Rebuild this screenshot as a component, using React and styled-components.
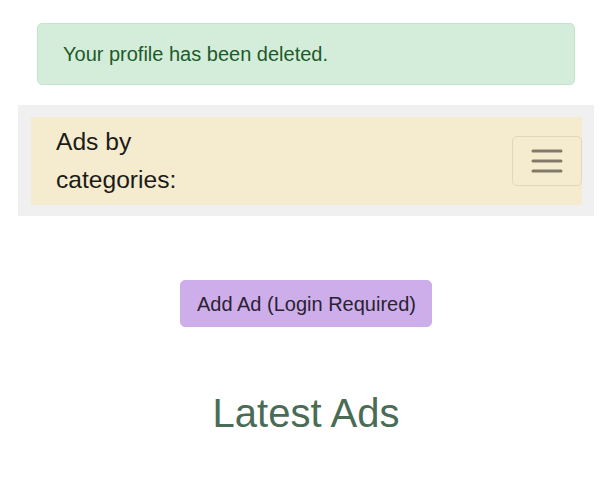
import React from "react";
import styled, { createGlobalStyle } from "styled-components";

const Global = createGlobalStyle`
  html, body { margin: 0; padding: 0; background: #ffffff; }
  body { font-family: "Liberation Sans", Arial, sans-serif; }
  * { box-sizing: border-box; }
`;

const Page = styled.div`
  display: flex;
  flex-direction: column;
  padding: 23px 3px 0 0;
`;

const Alert = styled.div`
  margin: 0 37px 20px 37px;
  padding: 15px 25px;
  background: #d4edda;
  border: 1px solid #c3e6cb;
  border-radius: 5px;
  color: #1d5a2a;
  font-size: 20px;
  line-height: 30px;
`;

const NavOuter = styled.div`
  margin: 0 18px;
  padding: 12px 12px 11px 13px;
  background: #f0f0f0;
`;

const NavBar = styled.nav`
  display: flex;
  align-items: center;
  justify-content: space-between;
  min-height: 88px;
  padding: 6px 0 6px 25px;
  background: #f5ecd0;
`;

const Brand = styled.div`
  width: 160px;
  font-size: 24.6px;
  line-height: 38px;
  color: #1c1b17;
`;

const Toggler = styled.button`
  display: flex;
  align-items: center;
  justify-content: center;
  width: 70px;
  height: 50px;
  padding: 0;
  background: transparent;
  border: 1px solid #e0d7bc;
  border-radius: 5px;
`;

const ActionRow = styled.div`
  display: flex;
  justify-content: center;
  margin-top: 64px;
`;

const AddButton = styled.button`
  height: 47px;
  padding: 0 15px 0 16px;
  background: #cdaeea;
  border: 1px solid #cdaeea;
  border-radius: 5px;
  color: #2a2233;
  font-family: "Liberation Sans", Arial, sans-serif;
  font-size: 20px;
  line-height: 30px;
`;

const Heading = styled.h2`
  margin: 62px 0 0;
  text-align: center;
  font-size: 40px;
  line-height: 48px;
  font-weight: 400;
  color: #4a6b55;
`;

const MenuIcon = () => (
  <svg width="32" height="32" viewBox="0 0 32 32" aria-hidden="true">
    <g stroke="#827a66" strokeWidth="3" strokeLinecap="round">
      <path d="M2 6h28" />
      <path d="M2 16h28" />
      <path d="M2 26h28" />
    </g>
  </svg>
);

export default function App() {
  return (
    <>
      <Global />
      <Page>
        <Alert>Your profile has been deleted.</Alert>
        <NavOuter>
          <NavBar>
            <Brand>Ads by categories:</Brand>
            <Toggler aria-label="Toggle navigation">
              <MenuIcon />
            </Toggler>
          </NavBar>
        </NavOuter>
        <ActionRow>
          <AddButton>Add Ad (Login Required)</AddButton>
        </ActionRow>
        <Heading>Latest Ads</Heading>
      </Page>
    </>
  );
}
